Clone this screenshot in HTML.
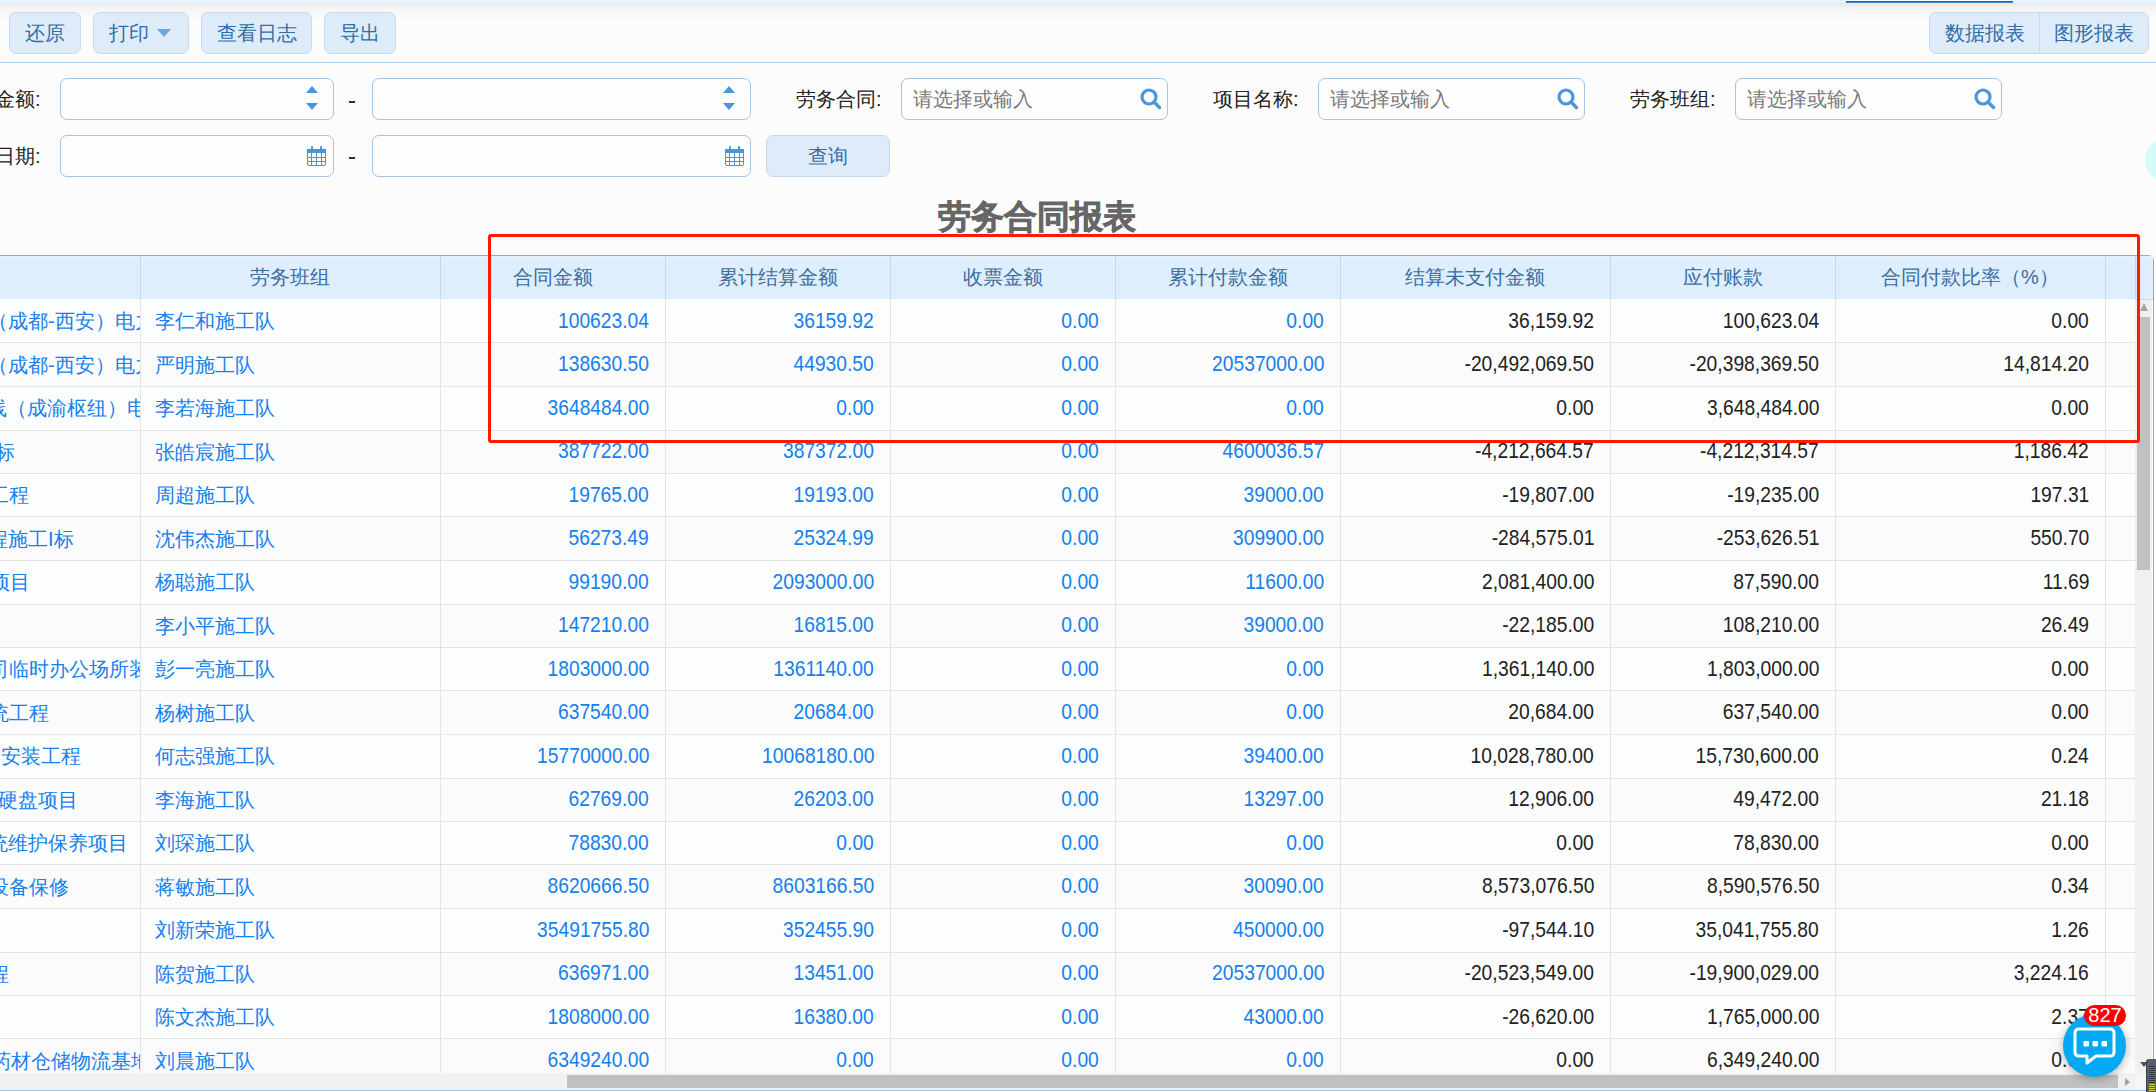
<!DOCTYPE html><html><head><meta charset="utf-8"><title>劳务合同报表</title><style>
*{margin:0;padding:0;box-sizing:border-box}
html,body{width:2156px;height:1092px;overflow:hidden;background:#fcfcfd;font-family:"Liberation Sans",sans-serif;}
.a{position:absolute}
.btn{position:absolute;top:12px;height:42px;background:#deecfa;border:1px solid #c6dbef;border-radius:7px;color:#2f6ea8;font-size:20px;line-height:40px;text-align:center;white-space:nowrap}
.lbl{position:absolute;font-size:20px;color:#222;line-height:42px;white-space:nowrap}
.inp{position:absolute;height:42px;background:#fdfdfe;border:1px solid #a3c6e6;border-radius:7px}
.ph{position:absolute;left:11px;top:0;line-height:40px;font-size:20px;color:#7a7a7a;white-space:nowrap}
.dash{position:absolute;font-size:20px;color:#222;line-height:42px}
.hd{position:absolute;top:256px;height:43px;line-height:43px;font-size:20px;color:#3b6fa2;text-align:center;white-space:nowrap}
.vl{position:absolute;width:1px}
.c{position:absolute;font-size:20px;white-space:nowrap;line-height:43px;height:43px}
.r{text-align:right}
.bl{color:#1580ee}
.bk{color:#222}
.n{display:inline-block;font-size:22px;transform:scaleX(0.875);transform-origin:100% 50%}
</style></head><body>
<div class="a" style="left:0;top:0;width:2156px;height:3px;background:#e6f3fd"></div>
<div class="a" style="left:1846px;top:0;width:167px;height:3px;background:#fdfdfd"></div>
<div class="a" style="left:1846px;top:1px;width:167px;height:1px;background:#0b6cc3"></div>
<div class="a" style="left:1846px;top:2px;width:167px;height:1px;background:#3d89cf"></div>
<div class="a" style="left:0;top:3px;width:2156px;height:18px;background:linear-gradient(#e9e9e9,#f4f4f4 30%,#fcfcfd)"></div>
<div class="btn" style="left:9px;width:72px">还原</div>
<div class="btn" style="left:93px;width:96px;text-align:left;padding-left:15px">打印<span class="a" style="left:63px;top:16px;width:0;height:0;border-left:7px solid transparent;border-right:7px solid transparent;border-top:8px solid #6fa6d8"></span></div>
<div class="btn" style="left:201px;width:111px">查看日志</div>
<div class="btn" style="left:324px;width:72px">导出</div>
<div class="btn" style="left:1929px;width:220px;padding:0"><span class="a" style="left:0;top:0;width:109px;line-height:40px;text-align:center">数据报表</span><span class="a" style="left:109px;top:0;width:1px;height:40px;background:#c6dbef"></span><span class="a" style="left:110px;top:0;width:108px;line-height:40px;text-align:center">图形报表</span></div>
<div class="a" style="left:0;top:62px;width:2156px;height:1px;background:#a9c9e6"></div>
<div class="lbl" style="left:-5px;top:78px">金额:</div>
<div class="inp" style="left:60px;top:78px;width:274px"><span class="a" style="left:245px;top:7px;width:0;height:0;border-left:6px solid transparent;border-right:6px solid transparent;border-bottom:7px solid #4a95dc"></span><span class="a" style="left:245px;top:24px;width:0;height:0;border-left:6px solid transparent;border-right:6px solid transparent;border-top:7px solid #4a95dc"></span></div>
<div class="a" style="left:349px;top:101px;width:6px;height:2px;background:#333"></div>
<div class="inp" style="left:372px;top:78px;width:379px"><span class="a" style="left:350px;top:7px;width:0;height:0;border-left:6px solid transparent;border-right:6px solid transparent;border-bottom:7px solid #4a95dc"></span><span class="a" style="left:350px;top:24px;width:0;height:0;border-left:6px solid transparent;border-right:6px solid transparent;border-top:7px solid #4a95dc"></span></div>
<div class="lbl" style="left:796px;top:78px">劳务合同:</div>
<div class="inp" style="left:901px;top:78px;width:267px"><span class="ph">请选择或输入</span><svg class="a" style="left:238px;top:9px" width="22" height="22" viewBox="0 0 22 22"><circle cx="9" cy="9" r="7" fill="none" stroke="#4a95dc" stroke-width="3.2"/><path d="M14 14L19.5 19.5" stroke="#4a95dc" stroke-width="3.4" stroke-linecap="round"/></svg></div>
<div class="lbl" style="left:1213px;top:78px">项目名称:</div>
<div class="inp" style="left:1318px;top:78px;width:267px"><span class="ph">请选择或输入</span><svg class="a" style="left:238px;top:9px" width="22" height="22" viewBox="0 0 22 22"><circle cx="9" cy="9" r="7" fill="none" stroke="#4a95dc" stroke-width="3.2"/><path d="M14 14L19.5 19.5" stroke="#4a95dc" stroke-width="3.4" stroke-linecap="round"/></svg></div>
<div class="lbl" style="left:1630px;top:78px">劳务班组:</div>
<div class="inp" style="left:1735px;top:78px;width:267px"><span class="ph">请选择或输入</span><svg class="a" style="left:238px;top:9px" width="22" height="22" viewBox="0 0 22 22"><circle cx="9" cy="9" r="7" fill="none" stroke="#4a95dc" stroke-width="3.2"/><path d="M14 14L19.5 19.5" stroke="#4a95dc" stroke-width="3.4" stroke-linecap="round"/></svg></div>
<div class="lbl" style="left:-5px;top:135px">日期:</div>
<div class="inp" style="left:60px;top:135px;width:274px"><svg class="a" style="left:246px;top:10px" width="19" height="20" viewBox="0 0 19 20"><rect x="0.5" y="3.5" width="18" height="16" rx="1.5" fill="none" stroke="#4a95dc"/><rect x="0" y="3" width="19" height="4" fill="#4a95dc"/><rect x="4" y="0" width="2" height="5" rx="1" fill="#4a95dc"/><rect x="13" y="0" width="2" height="5" rx="1" fill="#4a95dc"/><path d="M0 11.5H19M0 15.5H19M4.5 7V20M9.5 7V20M14.5 7V20" stroke="#4a95dc" stroke-width="1"/></svg></div>
<div class="a" style="left:349px;top:157px;width:6px;height:2px;background:#333"></div>
<div class="inp" style="left:372px;top:135px;width:379px"><svg class="a" style="left:352px;top:10px" width="19" height="20" viewBox="0 0 19 20"><rect x="0.5" y="3.5" width="18" height="16" rx="1.5" fill="none" stroke="#4a95dc"/><rect x="0" y="3" width="19" height="4" fill="#4a95dc"/><rect x="4" y="0" width="2" height="5" rx="1" fill="#4a95dc"/><rect x="13" y="0" width="2" height="5" rx="1" fill="#4a95dc"/><path d="M0 11.5H19M0 15.5H19M4.5 7V20M9.5 7V20M14.5 7V20" stroke="#4a95dc" stroke-width="1"/></svg></div>
<div class="btn" style="left:766px;top:135px;width:124px">查询</div>
<div class="a" style="left:2145px;top:137px;width:47px;height:46px;border-radius:50%;background:#d4fafa"></div>
<div class="a" style="left:0;top:194px;width:2074px;text-align:center;font-size:33px;font-weight:900;color:#666;line-height:46px;-webkit-text-stroke:0.7px #666">劳务合同报表</div>
<div class="a" style="left:-10px;top:255px;width:2164px;height:836px;border:1px solid #74b0e4;border-bottom-color:#a6c9e8;border-radius:6px;background:#fcfcfd"></div>
<div class="a" style="left:0;top:256px;width:2153px;height:43px;background:#dfeefc"></div>
<div class="a" style="left:0;top:256px;width:2153px;height:1px;background:#e9f3fd"></div>
<div class="a" style="left:0;top:299px;width:2153px;height:1px;background:#c3d9ec"></div>
<div class="hd" style="left:140px;width:300px">劳务班组</div>
<div class="hd" style="left:440px;width:225px">合同金额</div>
<div class="hd" style="left:665px;width:225px">累计结算金额</div>
<div class="hd" style="left:890px;width:225px">收票金额</div>
<div class="hd" style="left:1115px;width:225px">累计付款金额</div>
<div class="hd" style="left:1340px;width:270px">结算未支付金额</div>
<div class="hd" style="left:1610px;width:225px">应付账款</div>
<div class="hd" style="left:1835px;width:270px">合同付款比率（%）</div>
<div class="vl" style="left:140px;top:256px;height:43px;background:#c3d9ec"></div>
<div class="vl" style="left:440px;top:256px;height:43px;background:#c3d9ec"></div>
<div class="vl" style="left:665px;top:256px;height:43px;background:#c3d9ec"></div>
<div class="vl" style="left:890px;top:256px;height:43px;background:#c3d9ec"></div>
<div class="vl" style="left:1115px;top:256px;height:43px;background:#c3d9ec"></div>
<div class="vl" style="left:1340px;top:256px;height:43px;background:#c3d9ec"></div>
<div class="vl" style="left:1610px;top:256px;height:43px;background:#c3d9ec"></div>
<div class="vl" style="left:1835px;top:256px;height:43px;background:#c3d9ec"></div>
<div class="vl" style="left:2105px;top:256px;height:43px;background:#c3d9ec"></div>
<div class="vl" style="left:2135px;top:256px;height:43px;background:#c3d9ec"></div>
<div class="a" style="left:0;top:299px;width:2135px;height:43px;background:#fcfdfd"></div>
<div class="a" style="left:0;top:300.0px;width:140px;height:43px;overflow:hidden"><span class="c bl" style="left:-12px;top:0">（成都-西安）电力</span></div>
<div class="c bl" style="left:155px;top:300.0px">李仁和施工队</div>
<div class="c r bl" style="left:440px;width:209px;top:298.5px"><span class="n">100623.04</span></div>
<div class="c r bl" style="left:665px;width:209px;top:298.5px"><span class="n">36159.92</span></div>
<div class="c r bl" style="left:890px;width:209px;top:298.5px"><span class="n">0.00</span></div>
<div class="c r bl" style="left:1115px;width:209px;top:298.5px"><span class="n">0.00</span></div>
<div class="c r bk" style="left:1340px;width:254px;top:298.5px"><span class="n">36,159.92</span></div>
<div class="c r bk" style="left:1610px;width:209px;top:298.5px"><span class="n">100,623.04</span></div>
<div class="c r bk" style="left:1835px;width:254px;top:298.5px"><span class="n">0.00</span></div>
<div class="a" style="left:0;top:342px;width:2135px;height:44px;background:#fbfbfb"></div>
<div class="a" style="left:0;top:343.5px;width:140px;height:43px;overflow:hidden"><span class="c bl" style="left:-12px;top:0">（成都-西安）电力</span></div>
<div class="c bl" style="left:155px;top:343.5px">严明施工队</div>
<div class="c r bl" style="left:440px;width:209px;top:342.0px"><span class="n">138630.50</span></div>
<div class="c r bl" style="left:665px;width:209px;top:342.0px"><span class="n">44930.50</span></div>
<div class="c r bl" style="left:890px;width:209px;top:342.0px"><span class="n">0.00</span></div>
<div class="c r bl" style="left:1115px;width:209px;top:342.0px"><span class="n">20537000.00</span></div>
<div class="c r bk" style="left:1340px;width:254px;top:342.0px"><span class="n">-20,492,069.50</span></div>
<div class="c r bk" style="left:1610px;width:209px;top:342.0px"><span class="n">-20,398,369.50</span></div>
<div class="c r bk" style="left:1835px;width:254px;top:342.0px"><span class="n">14,814.20</span></div>
<div class="a" style="left:0;top:386px;width:2135px;height:44px;background:#fcfdfd"></div>
<div class="a" style="left:0;top:387.0px;width:140px;height:43px;overflow:hidden"><span class="c bl" style="left:-13px;top:0">线（成渝枢纽）电力</span></div>
<div class="c bl" style="left:155px;top:387.0px">李若海施工队</div>
<div class="c r bl" style="left:440px;width:209px;top:385.5px"><span class="n">3648484.00</span></div>
<div class="c r bl" style="left:665px;width:209px;top:385.5px"><span class="n">0.00</span></div>
<div class="c r bl" style="left:890px;width:209px;top:385.5px"><span class="n">0.00</span></div>
<div class="c r bl" style="left:1115px;width:209px;top:385.5px"><span class="n">0.00</span></div>
<div class="c r bk" style="left:1340px;width:254px;top:385.5px"><span class="n">0.00</span></div>
<div class="c r bk" style="left:1610px;width:209px;top:385.5px"><span class="n">3,648,484.00</span></div>
<div class="c r bk" style="left:1835px;width:254px;top:385.5px"><span class="n">0.00</span></div>
<div class="a" style="left:0;top:430px;width:2135px;height:43px;background:#fbfbfb"></div>
<div class="a" style="left:0;top:430.5px;width:140px;height:43px;overflow:hidden"><span class="c bl" style="left:-5px;top:0">标</span></div>
<div class="c bl" style="left:155px;top:430.5px">张皓宸施工队</div>
<div class="c r bl" style="left:440px;width:209px;top:429.0px"><span class="n">387722.00</span></div>
<div class="c r bl" style="left:665px;width:209px;top:429.0px"><span class="n">387372.00</span></div>
<div class="c r bl" style="left:890px;width:209px;top:429.0px"><span class="n">0.00</span></div>
<div class="c r bl" style="left:1115px;width:209px;top:429.0px"><span class="n">4600036.57</span></div>
<div class="c r bk" style="left:1340px;width:254px;top:429.0px"><span class="n">-4,212,664.57</span></div>
<div class="c r bk" style="left:1610px;width:209px;top:429.0px"><span class="n">-4,212,314.57</span></div>
<div class="c r bk" style="left:1835px;width:254px;top:429.0px"><span class="n">1,186.42</span></div>
<div class="a" style="left:0;top:473px;width:2135px;height:43px;background:#fcfdfd"></div>
<div class="a" style="left:0;top:474.0px;width:140px;height:43px;overflow:hidden"><span class="c bl" style="left:-11px;top:0">工程</span></div>
<div class="c bl" style="left:155px;top:474.0px">周超施工队</div>
<div class="c r bl" style="left:440px;width:209px;top:472.5px"><span class="n">19765.00</span></div>
<div class="c r bl" style="left:665px;width:209px;top:472.5px"><span class="n">19193.00</span></div>
<div class="c r bl" style="left:890px;width:209px;top:472.5px"><span class="n">0.00</span></div>
<div class="c r bl" style="left:1115px;width:209px;top:472.5px"><span class="n">39000.00</span></div>
<div class="c r bk" style="left:1340px;width:254px;top:472.5px"><span class="n">-19,807.00</span></div>
<div class="c r bk" style="left:1610px;width:209px;top:472.5px"><span class="n">-19,235.00</span></div>
<div class="c r bk" style="left:1835px;width:254px;top:472.5px"><span class="n">197.31</span></div>
<div class="a" style="left:0;top:516px;width:2135px;height:44px;background:#fbfbfb"></div>
<div class="a" style="left:0;top:517.5px;width:140px;height:43px;overflow:hidden"><span class="c bl" style="left:-12px;top:0">程施工I标</span></div>
<div class="c bl" style="left:155px;top:517.5px">沈伟杰施工队</div>
<div class="c r bl" style="left:440px;width:209px;top:516.0px"><span class="n">56273.49</span></div>
<div class="c r bl" style="left:665px;width:209px;top:516.0px"><span class="n">25324.99</span></div>
<div class="c r bl" style="left:890px;width:209px;top:516.0px"><span class="n">0.00</span></div>
<div class="c r bl" style="left:1115px;width:209px;top:516.0px"><span class="n">309900.00</span></div>
<div class="c r bk" style="left:1340px;width:254px;top:516.0px"><span class="n">-284,575.01</span></div>
<div class="c r bk" style="left:1610px;width:209px;top:516.0px"><span class="n">-253,626.51</span></div>
<div class="c r bk" style="left:1835px;width:254px;top:516.0px"><span class="n">550.70</span></div>
<div class="a" style="left:0;top:560px;width:2135px;height:44px;background:#fcfdfd"></div>
<div class="a" style="left:0;top:561.0px;width:140px;height:43px;overflow:hidden"><span class="c bl" style="left:-10px;top:0">项目</span></div>
<div class="c bl" style="left:155px;top:561.0px">杨聪施工队</div>
<div class="c r bl" style="left:440px;width:209px;top:559.5px"><span class="n">99190.00</span></div>
<div class="c r bl" style="left:665px;width:209px;top:559.5px"><span class="n">2093000.00</span></div>
<div class="c r bl" style="left:890px;width:209px;top:559.5px"><span class="n">0.00</span></div>
<div class="c r bl" style="left:1115px;width:209px;top:559.5px"><span class="n">11600.00</span></div>
<div class="c r bk" style="left:1340px;width:254px;top:559.5px"><span class="n">2,081,400.00</span></div>
<div class="c r bk" style="left:1610px;width:209px;top:559.5px"><span class="n">87,590.00</span></div>
<div class="c r bk" style="left:1835px;width:254px;top:559.5px"><span class="n">11.69</span></div>
<div class="a" style="left:0;top:604px;width:2135px;height:43px;background:#fbfbfb"></div>
<div class="c bl" style="left:155px;top:604.5px">李小平施工队</div>
<div class="c r bl" style="left:440px;width:209px;top:603.0px"><span class="n">147210.00</span></div>
<div class="c r bl" style="left:665px;width:209px;top:603.0px"><span class="n">16815.00</span></div>
<div class="c r bl" style="left:890px;width:209px;top:603.0px"><span class="n">0.00</span></div>
<div class="c r bl" style="left:1115px;width:209px;top:603.0px"><span class="n">39000.00</span></div>
<div class="c r bk" style="left:1340px;width:254px;top:603.0px"><span class="n">-22,185.00</span></div>
<div class="c r bk" style="left:1610px;width:209px;top:603.0px"><span class="n">108,210.00</span></div>
<div class="c r bk" style="left:1835px;width:254px;top:603.0px"><span class="n">26.49</span></div>
<div class="a" style="left:0;top:647px;width:2135px;height:43px;background:#fcfdfd"></div>
<div class="a" style="left:0;top:648.0px;width:140px;height:43px;overflow:hidden"><span class="c bl" style="left:-11px;top:0">司临时办公场所装修</span></div>
<div class="c bl" style="left:155px;top:648.0px">彭一亮施工队</div>
<div class="c r bl" style="left:440px;width:209px;top:646.5px"><span class="n">1803000.00</span></div>
<div class="c r bl" style="left:665px;width:209px;top:646.5px"><span class="n">1361140.00</span></div>
<div class="c r bl" style="left:890px;width:209px;top:646.5px"><span class="n">0.00</span></div>
<div class="c r bl" style="left:1115px;width:209px;top:646.5px"><span class="n">0.00</span></div>
<div class="c r bk" style="left:1340px;width:254px;top:646.5px"><span class="n">1,361,140.00</span></div>
<div class="c r bk" style="left:1610px;width:209px;top:646.5px"><span class="n">1,803,000.00</span></div>
<div class="c r bk" style="left:1835px;width:254px;top:646.5px"><span class="n">0.00</span></div>
<div class="a" style="left:0;top:690px;width:2135px;height:44px;background:#fbfbfb"></div>
<div class="a" style="left:0;top:691.5px;width:140px;height:43px;overflow:hidden"><span class="c bl" style="left:-11px;top:0">统工程</span></div>
<div class="c bl" style="left:155px;top:691.5px">杨树施工队</div>
<div class="c r bl" style="left:440px;width:209px;top:690.0px"><span class="n">637540.00</span></div>
<div class="c r bl" style="left:665px;width:209px;top:690.0px"><span class="n">20684.00</span></div>
<div class="c r bl" style="left:890px;width:209px;top:690.0px"><span class="n">0.00</span></div>
<div class="c r bl" style="left:1115px;width:209px;top:690.0px"><span class="n">0.00</span></div>
<div class="c r bk" style="left:1340px;width:254px;top:690.0px"><span class="n">20,684.00</span></div>
<div class="c r bk" style="left:1610px;width:209px;top:690.0px"><span class="n">637,540.00</span></div>
<div class="c r bk" style="left:1835px;width:254px;top:690.0px"><span class="n">0.00</span></div>
<div class="a" style="left:0;top:734px;width:2135px;height:44px;background:#fcfdfd"></div>
<div class="a" style="left:0;top:735.0px;width:140px;height:43px;overflow:hidden"><span class="c bl" style="left:-19px;top:0">调安装工程</span></div>
<div class="c bl" style="left:155px;top:735.0px">何志强施工队</div>
<div class="c r bl" style="left:440px;width:209px;top:733.5px"><span class="n">15770000.00</span></div>
<div class="c r bl" style="left:665px;width:209px;top:733.5px"><span class="n">10068180.00</span></div>
<div class="c r bl" style="left:890px;width:209px;top:733.5px"><span class="n">0.00</span></div>
<div class="c r bl" style="left:1115px;width:209px;top:733.5px"><span class="n">39400.00</span></div>
<div class="c r bk" style="left:1340px;width:254px;top:733.5px"><span class="n">10,028,780.00</span></div>
<div class="c r bk" style="left:1610px;width:209px;top:733.5px"><span class="n">15,730,600.00</span></div>
<div class="c r bk" style="left:1835px;width:254px;top:733.5px"><span class="n">0.24</span></div>
<div class="a" style="left:0;top:778px;width:2135px;height:43px;background:#fbfbfb"></div>
<div class="a" style="left:0;top:778.5px;width:140px;height:43px;overflow:hidden"><span class="c bl" style="left:-2px;top:0">硬盘项目</span></div>
<div class="c bl" style="left:155px;top:778.5px">李海施工队</div>
<div class="c r bl" style="left:440px;width:209px;top:777.0px"><span class="n">62769.00</span></div>
<div class="c r bl" style="left:665px;width:209px;top:777.0px"><span class="n">26203.00</span></div>
<div class="c r bl" style="left:890px;width:209px;top:777.0px"><span class="n">0.00</span></div>
<div class="c r bl" style="left:1115px;width:209px;top:777.0px"><span class="n">13297.00</span></div>
<div class="c r bk" style="left:1340px;width:254px;top:777.0px"><span class="n">12,906.00</span></div>
<div class="c r bk" style="left:1610px;width:209px;top:777.0px"><span class="n">49,472.00</span></div>
<div class="c r bk" style="left:1835px;width:254px;top:777.0px"><span class="n">21.18</span></div>
<div class="a" style="left:0;top:821px;width:2135px;height:43px;background:#fcfdfd"></div>
<div class="a" style="left:0;top:822.0px;width:140px;height:43px;overflow:hidden"><span class="c bl" style="left:-12px;top:0">统维护保养项目</span></div>
<div class="c bl" style="left:155px;top:822.0px">刘琛施工队</div>
<div class="c r bl" style="left:440px;width:209px;top:820.5px"><span class="n">78830.00</span></div>
<div class="c r bl" style="left:665px;width:209px;top:820.5px"><span class="n">0.00</span></div>
<div class="c r bl" style="left:890px;width:209px;top:820.5px"><span class="n">0.00</span></div>
<div class="c r bl" style="left:1115px;width:209px;top:820.5px"><span class="n">0.00</span></div>
<div class="c r bk" style="left:1340px;width:254px;top:820.5px"><span class="n">0.00</span></div>
<div class="c r bk" style="left:1610px;width:209px;top:820.5px"><span class="n">78,830.00</span></div>
<div class="c r bk" style="left:1835px;width:254px;top:820.5px"><span class="n">0.00</span></div>
<div class="a" style="left:0;top:864px;width:2135px;height:44px;background:#fbfbfb"></div>
<div class="a" style="left:0;top:865.5px;width:140px;height:43px;overflow:hidden"><span class="c bl" style="left:-11px;top:0">设备保修</span></div>
<div class="c bl" style="left:155px;top:865.5px">蒋敏施工队</div>
<div class="c r bl" style="left:440px;width:209px;top:864.0px"><span class="n">8620666.50</span></div>
<div class="c r bl" style="left:665px;width:209px;top:864.0px"><span class="n">8603166.50</span></div>
<div class="c r bl" style="left:890px;width:209px;top:864.0px"><span class="n">0.00</span></div>
<div class="c r bl" style="left:1115px;width:209px;top:864.0px"><span class="n">30090.00</span></div>
<div class="c r bk" style="left:1340px;width:254px;top:864.0px"><span class="n">8,573,076.50</span></div>
<div class="c r bk" style="left:1610px;width:209px;top:864.0px"><span class="n">8,590,576.50</span></div>
<div class="c r bk" style="left:1835px;width:254px;top:864.0px"><span class="n">0.34</span></div>
<div class="a" style="left:0;top:908px;width:2135px;height:44px;background:#fcfdfd"></div>
<div class="c bl" style="left:155px;top:909.0px">刘新荣施工队</div>
<div class="c r bl" style="left:440px;width:209px;top:907.5px"><span class="n">35491755.80</span></div>
<div class="c r bl" style="left:665px;width:209px;top:907.5px"><span class="n">352455.90</span></div>
<div class="c r bl" style="left:890px;width:209px;top:907.5px"><span class="n">0.00</span></div>
<div class="c r bl" style="left:1115px;width:209px;top:907.5px"><span class="n">450000.00</span></div>
<div class="c r bk" style="left:1340px;width:254px;top:907.5px"><span class="n">-97,544.10</span></div>
<div class="c r bk" style="left:1610px;width:209px;top:907.5px"><span class="n">35,041,755.80</span></div>
<div class="c r bk" style="left:1835px;width:254px;top:907.5px"><span class="n">1.26</span></div>
<div class="a" style="left:0;top:952px;width:2135px;height:43px;background:#fbfbfb"></div>
<div class="a" style="left:0;top:952.5px;width:140px;height:43px;overflow:hidden"><span class="c bl" style="left:-11px;top:0">程</span></div>
<div class="c bl" style="left:155px;top:952.5px">陈贺施工队</div>
<div class="c r bl" style="left:440px;width:209px;top:951.0px"><span class="n">636971.00</span></div>
<div class="c r bl" style="left:665px;width:209px;top:951.0px"><span class="n">13451.00</span></div>
<div class="c r bl" style="left:890px;width:209px;top:951.0px"><span class="n">0.00</span></div>
<div class="c r bl" style="left:1115px;width:209px;top:951.0px"><span class="n">20537000.00</span></div>
<div class="c r bk" style="left:1340px;width:254px;top:951.0px"><span class="n">-20,523,549.00</span></div>
<div class="c r bk" style="left:1610px;width:209px;top:951.0px"><span class="n">-19,900,029.00</span></div>
<div class="c r bk" style="left:1835px;width:254px;top:951.0px"><span class="n">3,224.16</span></div>
<div class="a" style="left:0;top:995px;width:2135px;height:43px;background:#fcfdfd"></div>
<div class="c bl" style="left:155px;top:996.0px">陈文杰施工队</div>
<div class="c r bl" style="left:440px;width:209px;top:994.5px"><span class="n">1808000.00</span></div>
<div class="c r bl" style="left:665px;width:209px;top:994.5px"><span class="n">16380.00</span></div>
<div class="c r bl" style="left:890px;width:209px;top:994.5px"><span class="n">0.00</span></div>
<div class="c r bl" style="left:1115px;width:209px;top:994.5px"><span class="n">43000.00</span></div>
<div class="c r bk" style="left:1340px;width:254px;top:994.5px"><span class="n">-26,620.00</span></div>
<div class="c r bk" style="left:1610px;width:209px;top:994.5px"><span class="n">1,765,000.00</span></div>
<div class="c r bk" style="left:1835px;width:254px;top:994.5px"><span class="n">2.37</span></div>
<div class="a" style="left:0;top:1038px;width:2135px;height:44px;background:#fbfbfb"></div>
<div class="a" style="left:0;top:1039.5px;width:140px;height:43px;overflow:hidden"><span class="c bl" style="left:-9px;top:0">药材仓储物流基地</span></div>
<div class="c bl" style="left:155px;top:1039.5px">刘晨施工队</div>
<div class="c r bl" style="left:440px;width:209px;top:1038.0px"><span class="n">6349240.00</span></div>
<div class="c r bl" style="left:665px;width:209px;top:1038.0px"><span class="n">0.00</span></div>
<div class="c r bl" style="left:890px;width:209px;top:1038.0px"><span class="n">0.00</span></div>
<div class="c r bl" style="left:1115px;width:209px;top:1038.0px"><span class="n">0.00</span></div>
<div class="c r bk" style="left:1340px;width:254px;top:1038.0px"><span class="n">0.00</span></div>
<div class="c r bk" style="left:1610px;width:209px;top:1038.0px"><span class="n">6,349,240.00</span></div>
<div class="c r bk" style="left:1835px;width:254px;top:1038.0px"><span class="n">0.00</span></div>
<div class="a" style="left:0;top:342px;width:2135px;height:1px;background:#e4e4e4"></div>
<div class="a" style="left:0;top:386px;width:2135px;height:1px;background:#e4e4e4"></div>
<div class="a" style="left:0;top:430px;width:2135px;height:1px;background:#e4e4e4"></div>
<div class="a" style="left:0;top:473px;width:2135px;height:1px;background:#e4e4e4"></div>
<div class="a" style="left:0;top:516px;width:2135px;height:1px;background:#e4e4e4"></div>
<div class="a" style="left:0;top:560px;width:2135px;height:1px;background:#e4e4e4"></div>
<div class="a" style="left:0;top:604px;width:2135px;height:1px;background:#e4e4e4"></div>
<div class="a" style="left:0;top:647px;width:2135px;height:1px;background:#e4e4e4"></div>
<div class="a" style="left:0;top:690px;width:2135px;height:1px;background:#e4e4e4"></div>
<div class="a" style="left:0;top:734px;width:2135px;height:1px;background:#e4e4e4"></div>
<div class="a" style="left:0;top:778px;width:2135px;height:1px;background:#e4e4e4"></div>
<div class="a" style="left:0;top:821px;width:2135px;height:1px;background:#e4e4e4"></div>
<div class="a" style="left:0;top:864px;width:2135px;height:1px;background:#e4e4e4"></div>
<div class="a" style="left:0;top:908px;width:2135px;height:1px;background:#e4e4e4"></div>
<div class="a" style="left:0;top:952px;width:2135px;height:1px;background:#e4e4e4"></div>
<div class="a" style="left:0;top:995px;width:2135px;height:1px;background:#e4e4e4"></div>
<div class="a" style="left:0;top:1038px;width:2135px;height:1px;background:#e4e4e4"></div>
<div class="a" style="left:0;top:1082px;width:2135px;height:1px;background:#e4e4e4"></div>
<div class="vl" style="left:140px;top:300px;height:773px;background:#e4e4e4"></div>
<div class="vl" style="left:440px;top:300px;height:773px;background:#e4e4e4"></div>
<div class="vl" style="left:665px;top:300px;height:773px;background:#e4e4e4"></div>
<div class="vl" style="left:890px;top:300px;height:773px;background:#e4e4e4"></div>
<div class="vl" style="left:1115px;top:300px;height:773px;background:#e4e4e4"></div>
<div class="vl" style="left:1340px;top:300px;height:773px;background:#e4e4e4"></div>
<div class="vl" style="left:1610px;top:300px;height:773px;background:#e4e4e4"></div>
<div class="vl" style="left:1835px;top:300px;height:773px;background:#e4e4e4"></div>
<div class="vl" style="left:2105px;top:300px;height:773px;background:#e4e4e4"></div>
<div class="vl" style="left:2135px;top:300px;height:773px;background:#e4e4e4"></div>
<div class="a" style="left:2135px;top:300px;width:17px;height:773px;background:#f0f0f0"></div>
<div class="a" style="left:2140px;top:303px;width:0;height:0;border-left:4px solid transparent;border-right:4px solid transparent;border-bottom:8px solid #a3a3a3"></div>
<div class="a" style="left:2137px;top:317px;width:13px;height:253px;background:#c1c1c1"></div>
<div class="a" style="left:2140px;top:1062px;width:0;height:0;border-left:4px solid transparent;border-right:4px solid transparent;border-top:5px solid #555"></div>
<div class="a" style="left:0;top:1073px;width:2135px;height:17px;background:#f1f1f1"></div>
<div class="a" style="left:567px;top:1075px;width:1551px;height:13px;background:#c1c1c1"></div>
<div class="a" style="left:2125px;top:1078px;width:0;height:0;border-top:4px solid transparent;border-bottom:4px solid transparent;border-left:5px solid #a3a3a3"></div>
<div class="a" style="left:2135px;top:1073px;width:17px;height:17px;background:#f6f6f6"></div>
<div class="a" style="left:488px;top:234px;width:1652px;height:209px;border:3px solid #ff1a00;border-radius:3px"></div>
<div class="a" style="left:2063px;top:1014px;width:63px;height:63px;border-radius:50%;background:#03a9f4;box-shadow:0 2px 8px rgba(0,0,0,0.3)"><svg class="a" style="left:10px;top:13px" width="44" height="40" viewBox="0 0 44 40"><path d="M6 2H37Q41 2 41 6V25Q41 29 37 29H23L14 36V29H6Q2 29 2 25V6Q2 2 6 2Z" fill="none" stroke="#fff" stroke-width="3" stroke-linejoin="round"/><rect x="10.5" y="14" width="5.5" height="5.5" rx="1" fill="#fff"/><rect x="19.5" y="14" width="5.5" height="5.5" rx="1" fill="#fff"/><rect x="28.5" y="14" width="5.5" height="5.5" rx="1" fill="#fff"/></svg></div>
<div class="a" style="left:2084px;top:1005px;width:42px;height:21px;border-radius:11px;background:#f00;color:#fff;font-size:20px;line-height:21px;text-align:center">827</div>
<div class="a" style="left:2146px;top:1059px;width:10px;height:33px;background:#565d6b;border-radius:3px 0 0 0;border-left:1px solid #3a3f4a"></div>
<div class="a" style="left:2149px;top:1066px;width:6px;height:18px;background:repeating-linear-gradient(#2e323b 0 1px,#6a707c 1px 2px)"></div>
<div class="a" style="left:2149px;top:1084px;width:6px;height:8px;background:repeating-linear-gradient(#d8d040 0 1px,#565d6b 1px 2px)"></div>
</body></html>
